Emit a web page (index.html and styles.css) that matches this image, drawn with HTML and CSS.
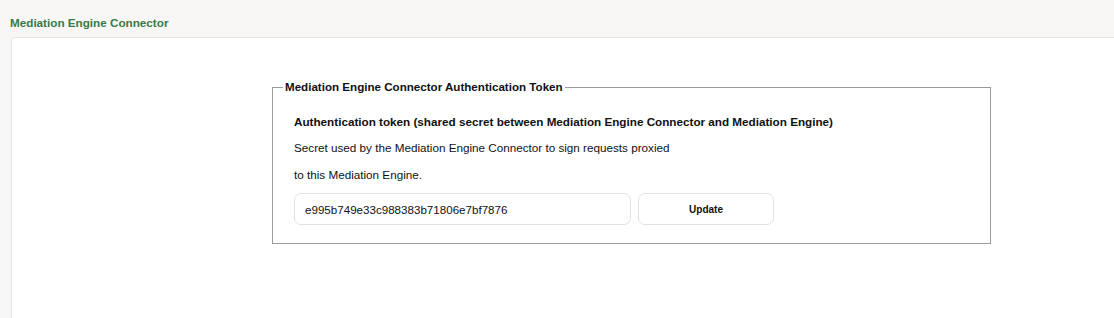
FILE: index.html
```html
<!DOCTYPE html>
<html>
<head>
<meta charset="utf-8">
<link rel="stylesheet" href="styles.css">
</head>
<body>
<div class="page">
  <h1 class="title">Mediation Engine Connector</h1>
  <div class="panel">
    <fieldset class="box">
      <legend class="legend">Mediation Engine Connector Authentication Token</legend>
      <div class="label">Authentication token (shared secret between Mediation Engine Connector and Mediation Engine)</div>
      <p class="desc">Secret used by the Mediation Engine Connector to sign requests proxied</p>
      <p class="desc second">to this Mediation Engine.</p>
      <div class="row">
        <input class="token" type="text" value="e995b749e33c988383b71806e7bf7876">
        <button class="btn" type="button">Update</button>
      </div>
    </fieldset>
  </div>
</div>
</body>
</html>
```
FILE: styles.css
```css
html, body {
  margin: 0;
  padding: 0;
  background: #f8f7f5;
  font-family: "Liberation Sans", Arial, Helvetica, sans-serif;
  color: #111;
}
.page {
  height: 318px;
  overflow: hidden;
}
.title {
  margin: 0;
  padding: 16px 0 0 10px;
  height: 21px;
  font-size: 11.7px;
  font-weight: bold;
  color: #3b7a47;
  line-height: 14px;
}
.panel {
  margin-left: 11px;
  height: 281px;
  box-sizing: border-box;
  background: #fff;
  border: 1px solid #e4e4e4;
  border-right: none;
  border-bottom: none;
  border-top-left-radius: 4px;
  padding-top: 42px;
}
.box {
  margin: 0 0 0 260px;
  width: 719px;
  box-sizing: border-box;
  border: 1px solid #9a9a9a;
  padding: 21px 22px 18px 21px;
  min-width: 0;
}
.legend {
  font-size: 11.6px;
  font-weight: bold;
  padding: 0 2px;
  margin-left: -11px;
  line-height: 14px;
}
.label {
  font-size: 11.7px;
  font-weight: bold;
  line-height: 14px;
}
.desc {
  font-size: 11.7px;
  line-height: 14px;
  margin: 12px 0 0 0;
}
.desc.second {
  margin-top: 13px;
}
.row {
  display: flex;
  gap: 7px;
  margin-top: 11px;
}
.token {
  width: 337px;
  height: 32px;
  box-sizing: border-box;
  border: 1px solid #e2e2e2;
  border-radius: 7px;
  padding: 0 10px;
  font-family: "Liberation Sans", Arial, sans-serif;
  font-size: 11.6px;
  color: #111;
  outline: none;
}
.btn {
  width: 136px;
  height: 32px;
  box-sizing: border-box;
  border: 1px solid #e2e2e2;
  border-radius: 7px;
  background: #fff;
  font-family: "Liberation Sans", Arial, sans-serif;
  font-size: 10px;
  font-weight: bold;
  color: #111;
}
```
